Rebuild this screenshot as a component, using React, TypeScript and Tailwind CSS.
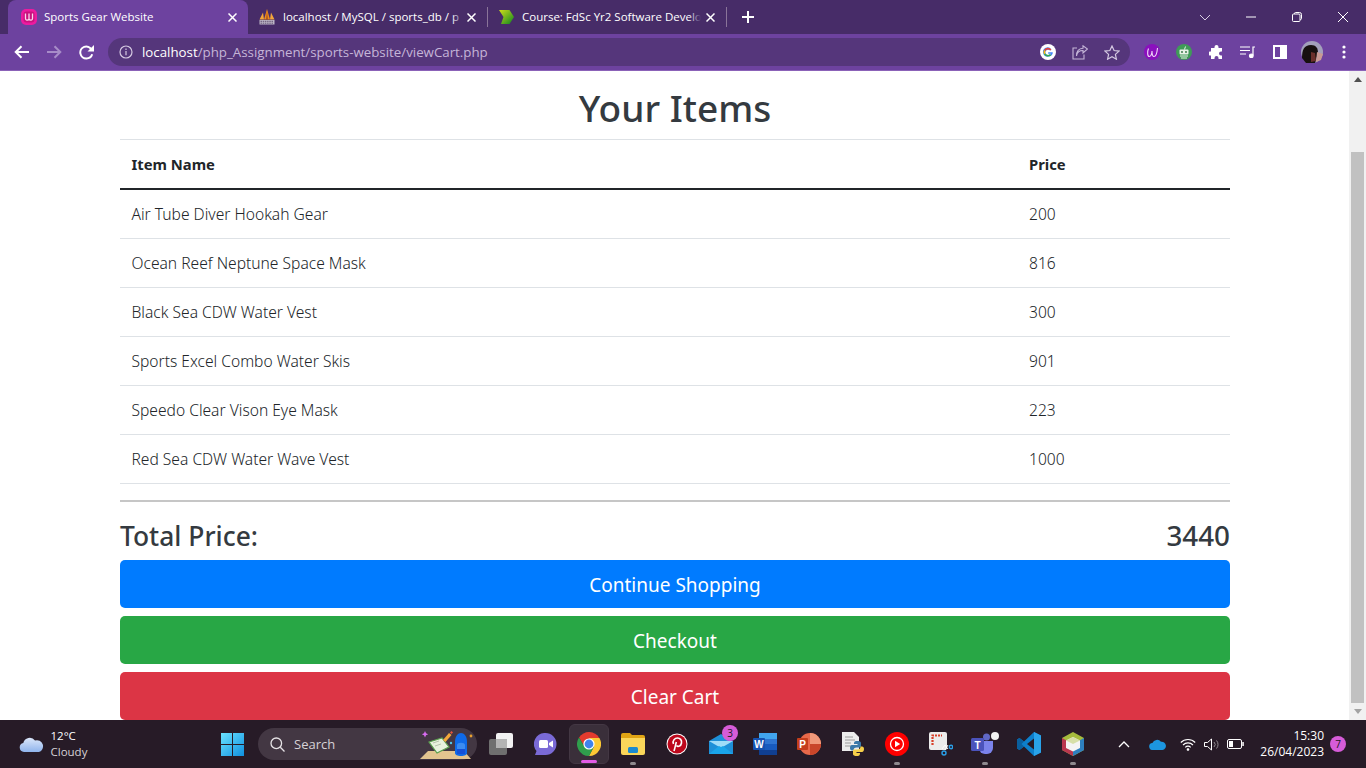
import React from "react";

const ITEMS: [string, string][] = [
  ["Air Tube Diver Hookah Gear", "200"],
  ["Ocean Reef Neptune Space Mask", "816"],
  ["Black Sea CDW Water Vest", "300"],
  ["Sports Excel Combo Water Skis", "901"],
  ["Speedo Clear Vison Eye Mask", "223"],
  ["Red Sea CDW Water Wave Vest", "1000"],
];

const UI = "font-['Open_Sans','Noto_Sans',sans-serif]";

function Close() {
  return (
    <svg width="9" height="9" viewBox="0 0 9 9" className="shrink-0" stroke="#fff" strokeWidth="1.500" fill="none">
      <path d="M.5.500l8 8M8.500.500l-8 8" />
    </svg>
  );
}

function WampIcon() {
  return (
    <svg width="16" height="16" viewBox="0 0 16 16" className="shrink-0">
      <rect width="16" height="16" rx="5" fill="#ec1ba0" />
      <rect x="2.500" y="2.500" width="11" height="11" rx="3" fill="#c9127f" />
      <path d="M4.500 4.500v5c0 2 2.300 2 3.500.8 1.200 1.200 3.500 1.200 3.500-.8v-5M8 4.500v5.500" stroke="#fbd5ee" strokeWidth="1.300" fill="none" />
    </svg>
  );
}

function PmaIcon() {
  return (
    <svg width="16" height="16" viewBox="0 0 16 16" className="shrink-0">
      <path d="M0.500 10.500L4 3.500l1 7z" fill="#f4a63a" />
      <path d="M5 10.500L8 0l3 10.500z" fill="#f08c1a" />
      <path d="M8 2L7.300 10.500h1.400z" fill="#8a3d20" />
      <path d="M11 10.500l1-7 3.500 7z" fill="#f4a63a" />
      <rect x="0.500" y="11" width="15" height="4.500" fill="#bdb6c6" />
      <path d="M1.500 12.300h13M1.500 14.200h13" stroke="#4c3a60" strokeWidth="0.800" strokeDasharray="1.500 .7" />
    </svg>
  );
}

function MoodleIcon() {
  return (
    <svg width="15" height="14" viewBox="0 0 15 14" className="shrink-0">
      <defs>
        <linearGradient id="md" x1="0" y1="0" x2="1" y2="1">
          <stop offset="0" stopColor="#d2de1a" />
          <stop offset="1" stopColor="#0a8420" />
        </linearGradient>
      </defs>
      <path d="M0 0h10.500L15 7l-4.500 7H2l2.500-7z" fill="url(#md)" />
    </svg>
  );
}

function FadedTitle({ text }: { text: string }) {
  return (
    <span className="flex-1 min-w-0 h-[18px] overflow-hidden relative">
      <span className="block whitespace-nowrap">{text}</span>
      <span className="absolute right-0 top-0 bottom-0 w-[12px] bg-gradient-to-r from-[#472c6800] to-[#472c68]" />
    </span>
  );
}

function ChromeTop() {
  return (
    <div className={`${UI} shrink-0`}>
      <div className="h-[34px] bg-[#472c68] flex items-end relative">
        <div className="ml-2 w-[240px] h-[34px] bg-[#6d429f] rounded-t-lg flex items-center pl-[13px] pr-[11px] gap-[7px] text-[11.5px] text-white">
          <WampIcon />
          <span className="flex-1 truncate">Sports Gear Website</span>
          <Close />
        </div>
        <div className="w-[239px] h-[34px] flex items-center pl-[11px] pr-[11px] text-[11.5px] text-white">
          <PmaIcon />
          <span className="w-2 shrink-0" />
          <FadedTitle text="localhost / MySQL / sports_db / p" />
          <span className="w-[3px] shrink-0" />
          <Close />
        </div>
        <div className="w-px h-5 bg-[#8a7499] mb-[7px]" />
        <div className="w-[238px] h-[34px] flex items-center pl-[11px] pr-[11px] text-[11.5px] text-white">
          <MoodleIcon />
          <span className="w-2 shrink-0" />
          <FadedTitle text="Course: FdSc Yr2 Software Develo" />
          <span className="w-[5px] shrink-0" />
          <Close />
        </div>
        <div className="w-px h-5 bg-[#8a7499] mb-[7px]" />
        <div className="w-[42px] h-[34px] flex items-center justify-center">
          <svg width="12" height="12" viewBox="0 0 12 12" stroke="#fff" strokeWidth="2">
            <path d="M6 0v12M0 6h12" />
          </svg>
        </div>
        <div className="flex-1" />
        <div className="h-[34px] flex items-center">
          <div className="w-[46px] flex justify-center">
            <svg width="12" height="7" viewBox="0 0 12 7" fill="none" stroke="#d8cfe2" strokeWidth="1"><path d="M1 1l5 5 5-5" /></svg>
          </div>
          <div className="w-[46px] flex justify-center">
            <svg width="10" height="2" viewBox="0 0 10 2" stroke="#fff" strokeWidth="1"><path d="M0 1h10" /></svg>
          </div>
          <div className="w-[46px] flex justify-center">
            <svg width="10" height="10" viewBox="0 0 10 10" fill="none" stroke="#fff" strokeWidth="1"><rect x="0.500" y="2" width="7.500" height="7.500" rx="1" /><path d="M2.500 2V1.500a1 1 0 011-1h4a2 2 0 012 2v4a1 1 0 01-1 1H8" /></svg>
          </div>
          <div className="w-[46px] flex justify-center">
            <svg width="10" height="10" viewBox="0 0 10 10" stroke="#fff" strokeWidth="1"><path d="M0 0l10 10M10 0L0 10" /></svg>
          </div>
        </div>
      </div>
      <div className="h-[37px] bg-[#6d429f] border-b border-[#8b62b8] flex items-center">
        <div className="w-[108px] flex items-center shrink-0">
          <div className="w-[44px] flex justify-center">
            <svg width="16" height="14" viewBox="0 0 16 14" fill="none" stroke="#fff" strokeWidth="2"><path d="M15 7H2M7.500 1.200L1.700 7l5.800 5.800" /></svg>
          </div>
          <div className="w-[20px] flex justify-center">
            <svg width="16" height="14" viewBox="0 0 16 14" fill="none" stroke="#a78cc8" strokeWidth="2"><path d="M1 7h13M8.500 1.200L14.300 7l-5.800 5.800" /></svg>
          </div>
          <div className="w-[44px] flex justify-center">
            <svg width="15" height="15" viewBox="0 0 15 15">
              <path d="M12.500 4.500A6 6 0 107.500 13.500a6 6 0 005.700-4.200" fill="none" stroke="#fff" strokeWidth="2" />
              <path d="M15 0v6.500H8.500z" fill="#fff" />
            </svg>
          </div>
        </div>
        <div className="w-[1022px] h-7 rounded-full bg-[#55367b] flex items-center pl-[11px] shrink-0">
          <svg width="14" height="14" viewBox="0 0 14 14" fill="none" stroke="#d5c9e1" strokeWidth="1.200" className="shrink-0">
            <circle cx="7" cy="7" r="6" /><path d="M7 6v4.200M7 3.600v1.300" />
          </svg>
          <span className="ml-[9px] pt-px text-[13.3px] text-[#c5b5d8] whitespace-nowrap">
            <span className="text-white font-medium">localhost</span>/php_Assignment/sports-website/viewCart.php
          </span>
          <div className="flex-1" />
          <svg width="16" height="16" viewBox="0 0 16 16" className="shrink-0">
            <circle cx="8" cy="8" r="8" fill="#fff" />
            <path d="M12.800 8.200H8.200v1.600h2.700a2.900 2.900 0 11-.7-3.200l1.200-1.200A4.600 4.600 0 108 12.600c2.600 0 4.900-1.900 4.800-4.400z" fill="#4285f4" />
            <path d="M4 6l1.400 1A2.900 2.900 0 0110.200 6.600l1.200-1.200A4.600 4.600 0 004 6z" fill="#ea4335" />
            <path d="M4 10.200l1.400-1a2.900 2.900 0 004.600.9l1.200 1.100A4.600 4.600 0 014 10.200z" fill="#34a853" />
            <path d="M4 6a4.600 4.600 0 000 4.200l1.400-1a2.900 2.900 0 010-2.200z" fill="#fbbc05" />
          </svg>
          <svg width="16" height="15" viewBox="0 0 16 15" fill="none" stroke="#c5b5d8" strokeWidth="1.100" className="ml-4 shrink-0">
            <path d="M5 3H1v11h11V9.500" /><path d="M4.500 11c.5-3.500 3-5.500 6.500-5.500V8L15.500 4 11 .8v2.500C7 3.500 4.500 6.500 4.500 11z" />
          </svg>
          <svg width="16" height="15" viewBox="0 0 16 15" fill="none" stroke="#d5c9e1" strokeWidth="1.200" className="ml-4 shrink-0">
            <path d="M8 1l2.100 4.500 4.900.6-3.600 3.300 1 4.800L8 11.800l-4.400 2.400 1-4.800L1 6.100l4.900-.6z" />
          </svg>
          <div className="w-[10px] shrink-0" />
        </div>
        <div className="flex items-center flex-1">
          <div className="ml-[6px] w-[32px] flex justify-center">
            <div className="w-4 h-4 rounded-full bg-[#8a10bd] flex items-center justify-center">
              <svg width="13" height="11" viewBox="0 0 13 11" fill="none" stroke="#f2dcfa" strokeWidth="1.100"><path d="M2.500 1.500C1 5 1.500 9.500 3.500 9.500S6 5 6 4c0 2 .3 5.500 2 5.500S11 6 11.500 1" /></svg>
            </div>
          </div>
          <div className="w-[32px] flex justify-center">
            <div className="w-4 h-4 rounded-full bg-[#3f9a58] flex items-center justify-center">
              <svg width="12" height="13" viewBox="0 0 12 13"><rect x="1.500" y="3.500" width="9" height="5" rx="1" fill="#e8f2e8" /><circle cx="4" cy="6" r="0.900" fill="#2d6f3f" /><circle cx="8" cy="6" r="0.900" fill="#2d6f3f" /><path d="M6.500 3.500L7.500 0.500" stroke="#e8f2e8" /><path d="M2 10h8M3 12h6" stroke="#e8f2e8" /></svg>
            </div>
          </div>
          <div className="w-[32px] flex justify-center">
            <svg width="15" height="15" viewBox="0 0 15 15" fill="#fff"><path d="M5.500 3V2a2 2 0 014 0v1H13v3.500h-1a2 2 0 000 4h1V14H9.500v-1a2 2 0 00-4 0v1H2v-3.500H1a2 2 0 010-4h1V3z" /></svg>
          </div>
          <div className="w-[32px] flex justify-center">
            <svg width="16" height="12" viewBox="0 0 16 12" fill="none" stroke="#fff" strokeWidth="1.200"><path d="M0 1h10M0 4.500h10M0 8h6" /><path d="M13 9.500V1h2" /><circle cx="11.300" cy="9.800" r="1.800" fill="#fff" /></svg>
          </div>
          <div className="w-[32px] flex justify-center">
            <svg width="14" height="14" viewBox="0 0 14 14"><rect width="14" height="14" fill="#fff" /><rect x="2" y="2" width="5" height="10" fill="#6d429f" /></svg>
          </div>
          <div className="w-[32px] flex justify-center">
            <svg width="22" height="22" viewBox="0 0 22 22"><circle cx="11" cy="11" r="11" fill="#a3a0bb" /><path d="M1 17C1 9 3 4 10 4c5 0 7 3 7 8l-3 10H5z" fill="#17100f" /><path d="M10 11l4 1 1 8-5 1z" fill="#6a2f2a" /><path d="M16 11l6 2-2 6-5 2z" fill="#c99a94" /></svg>
          </div>
          <div className="w-[32px] flex justify-center">
            <svg width="4" height="14" viewBox="0 0 4 14" fill="#fff"><circle cx="2" cy="2" r="1.600" /><circle cx="2" cy="7" r="1.600" /><circle cx="2" cy="12" r="1.600" /></svg>
          </div>
        </div>
      </div>
    </div>
  );
}

function Scrollbar() {
  return (
    <div className="w-[17px] shrink-0 bg-[#f1f1f1] flex flex-col items-center">
      <div className="h-[17px] flex items-center justify-center shrink-0">
        <svg width="8" height="5" viewBox="0 0 8 5" fill="#505050"><path d="M4 0l4 5H0z" /></svg>
      </div>
      <div className="h-[64px] shrink-0" />
      <div className="w-[13px] flex-1 bg-[#c1c1c1]" />
      <div className="h-[17px] flex items-center justify-center shrink-0">
        <svg width="8" height="5" viewBox="0 0 8 5" fill="#a3a3a3"><path d="M4 5L0 0h8z" /></svg>
      </div>
    </div>
  );
}

function Page() {
  const font = "font-['Noto_Sans','Open_Sans',sans-serif]";
  return (
    <div className={`flex-1 min-w-0 bg-white overflow-hidden ${font}`}>
      <div className="w-[1110px] ml-[120px]">
        <h1 className="h-[68px] flex items-end justify-center text-[37px] leading-[54px] text-[#343a40] font-medium pb-[4px]">Your Items</h1>
        <div className="border-t border-[#dee2e6] text-[15.6px] text-[#212529]">
          <div className="h-[50px] flex items-center border-b-2 border-[#212529] font-bold text-[14.8px]">
            <div className="w-[909px] pl-[11.500px]">Item Name</div>
            <div>Price</div>
          </div>
          {ITEMS.map(([name, price]) => (
            <div key={name} className="h-[49px] pt-[2px] flex items-center border-b border-[#dee2e6] font-[350]">
              <div className="w-[909px] pl-[11.500px]">{name}</div>
              <div>{price}</div>
            </div>
          ))}
        </div>
        <div className="mt-4 h-[2px] bg-[#c6c6c6]" />
        <div className="h-[58px] flex items-end justify-between text-[26.400px] leading-[36px] text-[#343a40] font-medium pb-[6px]">
          <span>Total Price:</span>
          <span className="text-[27.800px] mb-px">3440</span>
        </div>
        <div className="flex flex-col gap-2 text-[19px] text-white">
          <button className="h-12 rounded-[5px] bg-[#007bff] pt-[3px]">Continue Shopping</button>
          <button className="h-12 rounded-[5px] bg-[#28a745] pt-[3px]">Checkout</button>
          <button className="h-12 rounded-[5px] bg-[#dc3545] pt-[3px]">Clear Cart</button>
        </div>
      </div>
    </div>
  );
}

function Cell({ dot, children, active }: { dot?: boolean; children: React.ReactNode; active?: boolean }) {
  return (
    <div className="w-[44px] h-[44px] relative flex items-center justify-center shrink-0">
      {active && <div className="absolute inset-[2px] rounded-md bg-[#3a2f3a] border border-[#433743]" />}
      <div className="relative flex items-center justify-center">{children}</div>
      {dot && <div className="absolute bottom-[1px] left-1/2 -ml-[3px] w-[6px] h-[3px] rounded-full bg-[#8f8a8f]" />}
      {active && <div className="absolute bottom-[3px] left-1/2 -ml-2 w-4 h-[3px] rounded-full bg-[#e35ce6]" />}
    </div>
  );
}

function Taskbar() {
  return (
    <div className={`${UI} shrink-0 h-[48px] bg-[#271b27] flex items-center relative text-white`}>
      <div className="w-[210px] flex items-center shrink-0 pl-[19px]">
        <svg width="25" height="17" viewBox="0 0 25 17">
          <defs><linearGradient id="cl" x1="0" y1="0" x2="0" y2="1"><stop offset="0" stopColor="#dbe7fb" /><stop offset="1" stopColor="#8fb4ec" /></linearGradient></defs>
          <path d="M5 16a4.500 4.500 0 01-.7-8.900A6.500 6.500 0 0116 4.600 5.800 5.800 0 0120 16z" fill="url(#cl)" />
        </svg>
        <div className="ml-[6.500px] text-[11.500px] leading-[16px]">
          <div>12°C</div>
          <div className="text-[#d6d2d6]">Cloudy</div>
        </div>
      </div>
      <Cell>
        <svg width="23" height="23" viewBox="0 0 23 23">
          <defs><linearGradient id="win" x1="0" y1="0" x2="1" y2="1"><stop offset="0" stopColor="#6be3ff" /><stop offset="1" stopColor="#0f8fdf" /></linearGradient></defs>
          <path d="M0 0h11v11H0zM12 0h11v11H12zM0 12h11v11H0zM12 12h11v11H12z" fill="url(#win)" />
        </svg>
      </Cell>
      <div className="ml-1 w-[219px] h-8 rounded-full bg-[#433743] flex items-center pl-[12px] relative shrink-0">
        <svg width="15" height="15" viewBox="0 0 15 15" fill="none" stroke="#e5e2e5" strokeWidth="1.300"><circle cx="6.300" cy="6.300" r="5.300" /><path d="M10.300 10.300L14.500 14.500" /></svg>
        <span className="ml-[9px] pt-px text-[13px] text-[#d6d2d6]">Search</span>
        <svg width="56" height="32" viewBox="0 0 56 32" className="absolute right-[2px] top-0">
          <path d="M1 31l8-8h36l7 8z" fill="#e3c48f" />
          <path d="M10 14l13-4 7 9-12 6z" fill="#e8f1dd" stroke="#5ca04f" strokeWidth="1.200" />
          <path d="M14 15l6-2M16 18l6-2" stroke="#aab8a0" strokeWidth="0.800" />
          <path d="M24 12l6-7 2.500 2-6 7z" fill="#f3a83b" />
          <path d="M31 4.500l1.500-1.500 1.500 1.500-1.500 1.500z" fill="#e8543a" />
          <path d="M36 14c0-6 3-9 6-9s6 3 6 9v11c0 2-2.500 3-6 3s-6-1-6-3z" fill="#0f6ae8" />
          <path d="M38 17c0-3 8-3 8 0v6h-8z" fill="#3c8cf0" />
          <path d="M38 21h8v5h-8z" fill="#1450d8" />
          <path d="M6 3l1 2.200 2.200 1L7 7.200 6 9.500l-1-2.300-2.200-1 2.200-1z" fill="#d86cf0" />
          <circle cx="52" cy="8" r="1.400" fill="#e8a030" />
          <circle cx="32" cy="15" r="1.200" fill="#57c6e8" />
        </svg>
      </div>
      <div className="ml-[2px] flex items-center">
        <Cell>
          <svg width="24" height="22" viewBox="0 0 24 22"><rect x="7" y="0" width="17" height="15" rx="2" fill="#f2f2f2" /><rect x="0" y="6" width="18" height="16" rx="2" fill="#6f6f6f" /><rect x="7" y="6" width="11" height="9" fill="#b4b4b4" /></svg>
        </Cell>
        <Cell>
          <svg width="23" height="22" viewBox="0 0 23 22"><path d="M11.500 0a11 11 0 010 22H1l1.500-4A11 11 0 0111.500 0z" fill="#7a6ad6" /><rect x="5" y="7" width="9" height="8" rx="1.500" fill="#fff" /><path d="M15 10l4-2.500v7L15 12z" fill="#fff" /></svg>
        </Cell>
        <Cell active>
          <svg width="24" height="24" viewBox="0 0 24 24">
            <path d="M12 12L22.400 6A12 12 0 002 5.500L7 14z" fill="#e33b2e" />
            <path d="M12 24a12 12 0 0010.400-18H12l5 8.500z" fill="#fcc934" />
            <path d="M2 5.500A12 12 0 0012 24l5-9.500-10-.5z" fill="#2f9e4c" />
            <circle cx="12" cy="12" r="5.600" fill="#fff" />
            <circle cx="12" cy="12" r="4.400" fill="#3f83ee" />
          </svg>
        </Cell>
        <Cell dot>
          <svg width="24" height="22" viewBox="0 0 24 22"><path d="M0 2a2 2 0 012-2h7l2 2h11a2 2 0 012 2v3H0z" fill="#e0a414" /><path d="M0 5h24v15a2 2 0 01-2 2H2a2 2 0 01-2-2z" fill="#fad65a" /><rect x="7" y="14" width="10" height="6" rx="1.500" fill="#1a8ad0" /></svg>
        </Cell>
        <Cell>
          <svg width="22" height="22" viewBox="0 0 22 22"><circle cx="11" cy="11" r="10.500" fill="#fff" /><circle cx="11" cy="11" r="9.500" fill="#bd081c" /><path d="M8 18c1-3 1.500-6 2.300-9M7.500 11C6 7.500 9 5 11.500 5S16 7 15.500 10s-3.500 4.500-5 2.500" stroke="#fff" strokeWidth="1.600" fill="none" /></svg>
        </Cell>
        <Cell>
          <svg width="24" height="20" viewBox="0 0 24 20"><path d="M0 7L12 0l12 7v13H0z" fill="#1e90d8" /><path d="M0 7h24L12 14z" fill="#9fdcf8" /><path d="M0 20l10-8 2 1 2-1 10 8z" fill="#1aa5ea" /></svg>
          <div className="absolute -top-[9px] left-[13px] w-4 h-4 rounded-full bg-[#d65cd8] text-[10px] leading-4 text-center text-[#1b1b1b]">3</div>
        </Cell>
        <Cell>
          <svg width="24" height="22" viewBox="0 0 24 22"><rect x="6" width="18" height="22" rx="2" fill="#2f74d0" /><rect x="6" width="18" height="6" fill="#41a5ee" /><rect x="6" y="11" width="18" height="6" fill="#185abd" /><rect x="6" y="17" width="18" height="5" fill="#103f91" /><rect y="5" width="12" height="12" rx="1" fill="#1552b0" /><text x="6" y="14.500" textAnchor="middle" fontSize="10" fontWeight="700" fill="#fff" fontFamily="Liberation Sans">W</text></svg>
        </Cell>
        <Cell>
          <svg width="24" height="22" viewBox="0 0 24 22"><circle cx="13" cy="11" r="11" fill="#e8694a" /><path d="M13 11V0a11 11 0 0111 11z" fill="#f0997a" /><path d="M13 11h11a11 11 0 01-11 11z" fill="#c9462a" /><rect y="5" width="11" height="12" rx="1" fill="#c43e1c" /><text x="5.500" y="14.500" textAnchor="middle" fontSize="10" fontWeight="700" fill="#fff" fontFamily="Liberation Sans">P</text></svg>
        </Cell>
        <Cell>
          <svg width="24" height="24" viewBox="0 0 24 24"><path d="M1 0h12l5 5v14H1z" fill="#ececec" /><path d="M4 5h8M4 8h10M4 11h6M4 14h6" stroke="#888" strokeWidth="0.800" /><path d="M16 9c-3 0-3 1.500-3 3h3.500v1H11c-1.500 0-2 1.500-2 3s.7 2.500 2 2.500h1.500c0-2 1-3 3-3h3c1 0 1.500-.7 1.500-1.500V11c0-1.500-1.500-2-4-2z" fill="#3a78a8" /><path d="M16 24c3 0 3-1.500 3-3h-3.500v-1H21c1.500 0 2-1.500 2-3s-.7-2.500-2-2.500h-1.500c0 2-1 3-3 3h-3c-1 0-1.500.7-1.500 1.500V22c0 1.500 1.500 2 4 2z" fill="#f5cf4a" /></svg>
        </Cell>
        <Cell dot>
          <svg width="24" height="24" viewBox="0 0 24 24"><circle cx="12" cy="12" r="12" fill="#f00" /><circle cx="12" cy="12" r="6.500" fill="none" stroke="#fff" strokeWidth="1.300" /><path d="M10 8.800v6.400l5.200-3.200z" fill="#fff" /></svg>
        </Cell>
        <Cell>
          <svg width="24" height="24" viewBox="0 0 24 24"><rect width="18" height="18" rx="2" fill="#ececec" /><path d="M3.500 13V3.500H13" fill="none" stroke="#d8402a" strokeWidth="2.200" strokeDasharray="2 1" /><path d="M13 17l3-4 3 4M19 13l-3 5" stroke="#fff" fill="none" /><circle cx="15" cy="21" r="2" fill="none" stroke="#2aa0e8" strokeWidth="1.400" /><circle cx="22" cy="15" r="1.700" fill="none" stroke="#2aa0e8" strokeWidth="1.400" /></svg>
        </Cell>
        <Cell dot>
          <svg width="28" height="24" viewBox="0 0 28 24"><circle cx="24" cy="4" r="4" fill="#f2f2f2" /><circle cx="15.500" cy="5" r="3.500" fill="#6068c4" /><path d="M8 9h14v7a6 6 0 01-6 6h-2a6 6 0 01-6-6z" fill="#7b83eb" /><rect y="6" width="13" height="13" rx="1.500" fill="#4b53bc" /><text x="6.500" y="16.500" textAnchor="middle" fontSize="10" fontWeight="700" fill="#fff" fontFamily="Liberation Sans">T</text></svg>
        </Cell>
        <Cell>
          <svg width="24" height="24" viewBox="0 0 24 24"><path d="M17 0l7 3.500v17L17 24 7 14.500 2.500 18 0 16.500V7.500L2.500 6 7 9.500z" fill="#0d7fcb" /><path d="M17 6.500L10 12l7 5.500z" fill="#271b27" /><path d="M17 0l7 3.500v17L17 24z" fill="#29a3ea" /><path d="M2.500 6L7 9.500 4.500 12 7 14.500 2.500 18 0 16.500V7.500z" fill="#0a5f9e" /></svg>
        </Cell>
        <Cell dot>
          <svg width="22" height="24" viewBox="0 0 22 24"><path d="M11 0l11 6v12l-11 6L0 18V6z" fill="#a6bc3d" /><path d="M0 6l11 6v12L0 18z" fill="#b9374f" /><path d="M22 6v12l-11 6V12z" fill="#2e7fbf" /><path d="M11 5l7 3.500v7.500l-7 3.500-7-3.500V8.500z" fill="#f4f4f4" /><path d="M11 5l7 3.500-7 3.500-7-3.500z" fill="#d7e0a8" /></svg>
        </Cell>
      </div>
      <div className="flex-1" />
      <div className="flex items-center pr-[20px]">
        <svg width="12" height="7" viewBox="0 0 12 7" fill="none" stroke="#fff" strokeWidth="1.300" className="mr-[19px]"><path d="M1 6l5-5 5 5" /></svg>
        <svg width="17" height="11" viewBox="0 0 17 11" className="mr-[14px]"><path d="M4 11a3.500 3.500 0 01-.6-7A5 5 0 0112 2.800 4 4 0 0113.500 11z" fill="#1c96e0" /></svg>
        <svg width="16" height="13" viewBox="0 0 16 13" fill="none" stroke="#fff" strokeWidth="1.100" className="mr-[8px]"><path d="M.8 4.500a10 10 0 0114.400 0M3 7a7 7 0 0110 0M5.300 9.300a3.700 3.700 0 015.400 0" /><circle cx="8" cy="11.500" r="0.800" fill="#fff" /></svg>
        <svg width="16" height="13" viewBox="0 0 16 13" fill="none" stroke="#fff" strokeWidth="1" className="mr-[7px]"><path d="M.5 4.500h3L7.500 1v11l-4-3.500h-3z" /><path d="M10 4a3.500 3.500 0 010 5M12.500 2.500a6 6 0 010 8" stroke="#8f8a8f" /></svg>
        <svg width="17" height="10" viewBox="0 0 17 10" className="mr-[16px]"><rect x="0.500" y="0.500" width="14" height="9" rx="1.500" fill="none" stroke="#fff" /><rect x="2" y="2" width="4" height="6" fill="#fff" /><rect x="15.300" y="3" width="1.500" height="4" fill="#fff" /></svg>
        <div className="text-xs leading-4 text-right mr-[6px]">
          <div>15:30</div>
          <div>26/04/2023</div>
        </div>
        <div className="w-4 h-4 rounded-full bg-[#d65cd8] text-[10px] leading-4 text-center text-[#1b1b1b]">7</div>
      </div>
    </div>
  );
}

export default function App() {
  return (
    <div className="w-[1366px] h-[768px] overflow-hidden flex flex-col">
      <ChromeTop />
      <div className="flex-1 min-h-0 flex">
        <Page />
        <Scrollbar />
      </div>
      <Taskbar />
    </div>
  );
}
